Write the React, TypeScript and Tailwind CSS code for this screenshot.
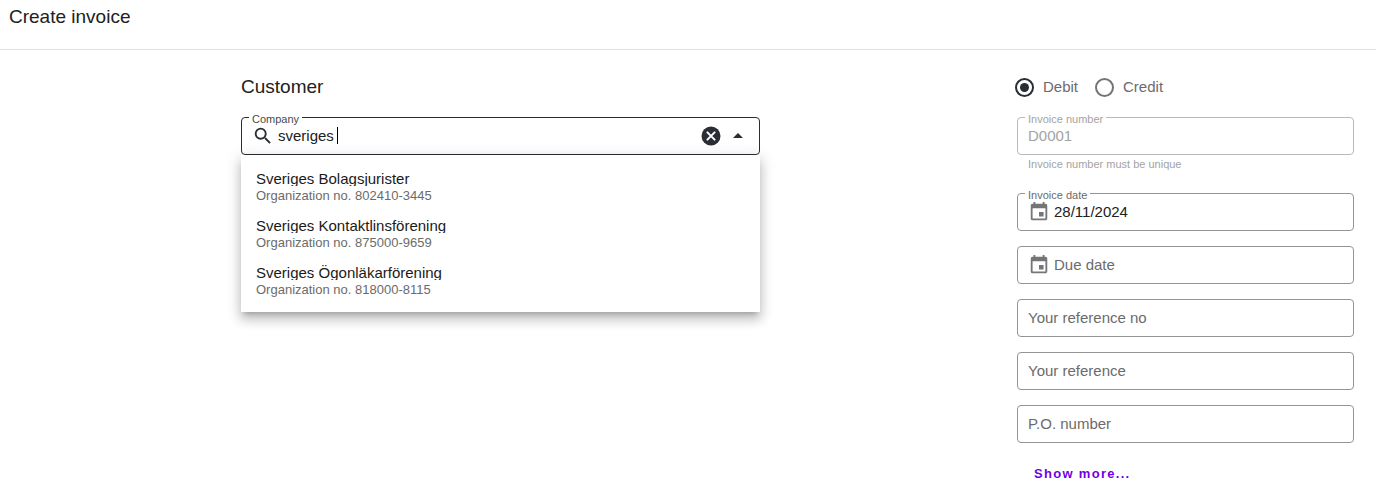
import { useState, type InputHTMLAttributes, type ReactNode } from 'react';
import { MdArrowDropUp, MdEvent, MdSearch } from 'react-icons/md';

const companies = [
    { name: 'Sveriges Bolagsjurister', orgNo: '802410-3445' },
    { name: 'Sveriges Kontaktlinsförening', orgNo: '875000-9659' },
    { name: 'Sveriges Ögonläkarförening', orgNo: '818000-8115' },
];

interface TextFieldProps extends InputHTMLAttributes<HTMLInputElement> {
    id: string;
    label?: string;
    icon?: ReactNode;
}

function TextField({ id, label, icon, disabled, ...props }: TextFieldProps) {
    return (
        <div
            className={`relative flex h-[38px] items-center rounded-[4px] border px-[10px] ${disabled ? 'border-[#b9b9b9] text-[#a3a3a3]' : 'border-[#949494] text-[#6b6b6b]'
                }`}
        >
            {label && (
                <label htmlFor={id} className="absolute -top-[5px] left-[7px] bg-white px-[3px] text-[11px] leading-[12px]">
                    {label}
                </label>
            )}
            {icon && <span className="mr-1 shrink-0 text-[#757575]">{icon}</span>}
            <input
                id={id}
                disabled={disabled}
                className={`w-full min-w-0 bg-transparent text-[15px] leading-[20px] outline-none placeholder:text-[#6b6b6b] ${disabled ? 'text-[#a3a3a3]' : 'text-[#212121]'
                    }`}
                {...props}
            />
        </div>
    );
}

function RadioOption({ label, checked, onChange }: { label: string; checked: boolean; onChange: () => void }) {
    return (
        <label className="flex items-center gap-[9px] text-[15px] leading-[20px] text-[#6b6b6b]">
            <span className="relative flex items-center justify-center">
                <input
                    type="radio"
                    name="invoice-type"
                    checked={checked}
                    onChange={onChange}
                    className="size-[19px] appearance-none rounded-full border-2 border-[#757575] checked:border-[#2a2d34]"
                />
                {checked && <span className="pointer-events-none absolute size-[9px] rounded-full bg-[#2a2d34]" />}
            </span>
            {label}
        </label>
    );
}

function ClearIcon() {
    return (
        <svg width="20" height="20" viewBox="0 0 20 20" fill="none" aria-hidden="true">
            <circle cx="10" cy="10" r="9.5" fill="currentColor" />
            <path d="M6.4 6.4l7.2 7.2M13.6 6.4l-7.2 7.2" stroke="white" strokeWidth="2" strokeLinecap="round" />
        </svg>
    );
}

function CompanySearch() {
    const [query, setQuery] = useState('sveriges ');

    return (
        <div className="relative">
            <div className="relative flex h-[38px] items-center rounded-[4px] border border-[#2a2d34] pr-[9px] pl-[10px]">
                <label
                    htmlFor="company"
                    className="absolute -top-[5px] left-[7px] bg-white px-[3px] text-[11px] leading-[12px] text-[#4a4a4a]"
                >
                    Company
                </label>
                <MdSearch size={22} className="shrink-0 text-[#2a2d34]" />
                <div className="relative ml-1 min-w-0 flex-1">
                    <input
                        id="company"
                        role="combobox"
                        aria-expanded="true"
                        aria-controls="company-options"
                        autoComplete="off"
                        value={query}
                        onChange={(e) => setQuery(e.target.value)}
                        className="w-full bg-transparent text-[15px] leading-[20px] text-[#212121] outline-none"
                    />
                    {/* Caret, kept right behind the typed text */}
                    <span aria-hidden="true" className="pointer-events-none absolute top-[3px] left-0 flex h-[17px]">
                        <span className="invisible text-[15px] whitespace-pre">{query}</span>
                        <span className="-ml-px w-px bg-black" />
                    </span>
                </div>
                <button type="button" aria-label="Clear" onClick={() => setQuery('')} className="text-[#2a2d34]">
                    <ClearIcon />
                </button>
                <button type="button" aria-label="Close" className="ml-[5px] text-[#2a2d34]">
                    <MdArrowDropUp size={24} />
                </button>
            </div>
            <ul
                id="company-options"
                role="listbox"
                aria-label="Company"
                className="absolute top-full right-0 left-0 bg-white py-2 shadow-[0_5px_5px_-3px_rgba(0,0,0,0.2),0_8px_10px_1px_rgba(0,0,0,0.14),0_3px_14px_2px_rgba(0,0,0,0.12)]"
            >
                {companies.map((company) => (
                    <li key={company.orgNo} role="option" aria-selected="false" className="px-[15px] pt-2 pb-[6px]">
                        <div className="overflow-hidden text-[15px] leading-[15px] text-[#1a1a1a]">{company.name}</div>
                        <div className="mt-[2px] text-[13px] leading-[16px] text-[#6b6b6b]">Organization no. {company.orgNo}</div>
                    </li>
                ))}
            </ul>
        </div>
    );
}

export default function App() {
    const [type, setType] = useState('debit');

    return (
        <div className="bg-white font-['Liberation_Sans',Arial,sans-serif] text-[#212121]">
            <header className="border-b border-[#e0e0e0] px-[9px] pt-[5px] pb-5">
                <h1 className="text-[19px] leading-[24px]">Create invoice</h1>
            </header>

            <div className="flex items-start">
                <main className="flex flex-1 justify-center pt-[25px]">
                    <div className="w-full max-w-[519px]">
                        <h2 className="mb-[18px] text-[19px] leading-[24px]">Customer</h2>
                        <CompanySearch />
                    </div>
                </main>

                <aside className="w-[375px] pt-[27px] pr-[22px] pl-4">
                    <div className="-ml-[2px] flex gap-[17px]">
                        <RadioOption label="Debit" checked={type === 'debit'} onChange={() => setType('debit')} />
                        <RadioOption label="Credit" checked={type === 'credit'} onChange={() => setType('credit')} />
                    </div>

                    <div className="mt-5 flex flex-col gap-[15px]">
                        <div>
                            <TextField id="invoice-number" label="Invoice number" defaultValue="D0001" disabled />
                            <p className="mt-px mb-[6px] px-[11px] text-[11px] leading-[16px] text-[#a3a3a3]">
                                Invoice number must be unique
                            </p>
                        </div>
                        <TextField id="invoice-date" label="Invoice date" icon={<MdEvent size={22} />} defaultValue="28/11/2024" />
                        <TextField id="due-date" aria-label="Due date" icon={<MdEvent size={22} />} placeholder="Due date" />
                        <TextField id="your-reference-no" aria-label="Your reference no" placeholder="Your reference no" />
                        <TextField id="your-reference" aria-label="Your reference" placeholder="Your reference" />
                        <TextField id="po-number" aria-label="P.O. number" placeholder="P.O. number" />
                    </div>

                    <button type="button" className="mt-[21px] px-[17px] text-[13px] leading-[20px] font-bold tracking-widest text-[#7200e5]">
                        Show more...
                    </button>
                </aside>
            </div>
        </div>
    );
}
